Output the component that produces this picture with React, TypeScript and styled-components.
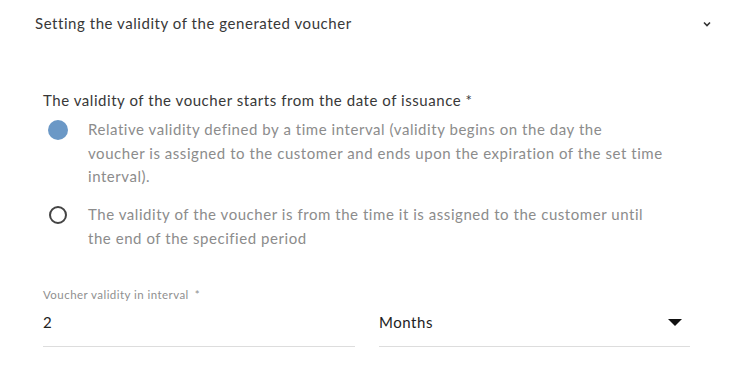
import React from "react";
import styled, { createGlobalStyle } from "styled-components";

const Global = createGlobalStyle`
  html, body { margin: 0; padding: 0; background: #fff; }
  body { font-family: "Lato", "Noto Sans", sans-serif; }
`;

const Page = styled.div`
  width: 735px;
  height: 383px;
  box-sizing: border-box;
  display: flex;
  flex-direction: column;
`;

const Header = styled.div`
  display: flex;
  align-items: center;
  justify-content: space-between;
  height: 46px;
  padding: 0 24px 0 35px;
  box-sizing: border-box;
`;

const HeaderTitle = styled.span`
  font-size: 15px;
  letter-spacing: 0.55px;
  color: #383838;
`;

const Chevron = styled.svg`
  width: 8px;
  height: 6px;
  margin-top: 1px;
`;

const Body = styled.div`
  display: flex;
  flex-direction: column;
  padding: 43px 45px 0 43px;
`;

const Question = styled.div`
  font-size: 15px;
  letter-spacing: 0.55px;
  color: #383838;
  line-height: 22px;
`;

const RadioGroup = styled.div`
  display: flex;
  flex-direction: column;
  gap: 14.5px;
  margin-top: 7px;
`;

const Option = styled.label`
  display: flex;
  align-items: flex-start;
  gap: 15px;
`;

const RadioSlot = styled.span`
  flex: none;
  width: 30px;
  height: 23.5px;
  display: flex;
  align-items: center;
  justify-content: center;
`;

const RadioDot = styled.span<{ $checked?: boolean }>`
  box-sizing: border-box;
  width: ${(p) => (p.$checked ? "20px" : "18px")};
  height: ${(p) => (p.$checked ? "20px" : "18px")};
  border-radius: 50%;
  background: ${(p) => (p.$checked ? "#6b98c6" : "transparent")};
  border: ${(p) => (p.$checked ? "none" : "2.5px solid #444")};
`;

const OptionText = styled.span`
  font-size: 15px;
  letter-spacing: 0.55px;
  line-height: 23.5px;
  color: #8c8c8c;
`;

const Fields = styled.div`
  display: grid;
  grid-template-columns: 312px 311px;
  column-gap: 24px;
  margin-top: 37px;
`;

const Field = styled.div`
  display: flex;
  flex-direction: column;
`;

const FieldLabel = styled.div`
  font-size: 11.5px;
  letter-spacing: 0.45px;
  color: #8f8f8f;
  height: 16px;
  line-height: 16px;
  span { margin-left: 6px; }
`;

const FieldValue = styled.div`
  display: flex;
  align-items: center;
  justify-content: space-between;
  padding: 8px 0 13px;
  line-height: 22px;
  font-size: 15px;
  letter-spacing: 0.55px;
  color: #222;
  border-bottom: 1px solid #ddd;
`;

const Caret = styled.svg`
  width: 14px;
  height: 7px;
  margin-right: 8px;
`;

export default function App() {
  return (
    <Page>
      <Global />
      <Header>
        <HeaderTitle>Setting the validity of the generated voucher</HeaderTitle>
        <Chevron viewBox="0 0 8 6">
          <path d="M1 1.5 L4 4.5 L7 1.5" fill="none" stroke="#333" strokeWidth="1.6" />
        </Chevron>
      </Header>
      <Body>
        <Question>The validity of the voucher starts from the date of issuance *</Question>
        <RadioGroup>
          <Option>
            <RadioSlot>
              <RadioDot $checked />
            </RadioSlot>
            <OptionText>
              Relative validity defined by a time interval (validity begins on the day the
              <br />
              voucher is assigned to the customer and ends upon the expiration of the set time
              <br />
              interval).
            </OptionText>
          </Option>
          <Option>
            <RadioSlot>
              <RadioDot />
            </RadioSlot>
            <OptionText>
              The validity of the voucher is from the time it is assigned to the customer until
              <br />
              the end of the specified period
            </OptionText>
          </Option>
        </RadioGroup>
        <Fields>
          <Field>
            <FieldLabel>
              Voucher validity in interval<span>*</span>
            </FieldLabel>
            <FieldValue>2</FieldValue>
          </Field>
          <Field>
            <FieldLabel />
            <FieldValue>
              Months
              <Caret viewBox="0 0 14 7">
                <path d="M0 0 H14 L7 7 Z" fill="#111" />
              </Caret>
            </FieldValue>
          </Field>
        </Fields>
      </Body>
    </Page>
  );
}
